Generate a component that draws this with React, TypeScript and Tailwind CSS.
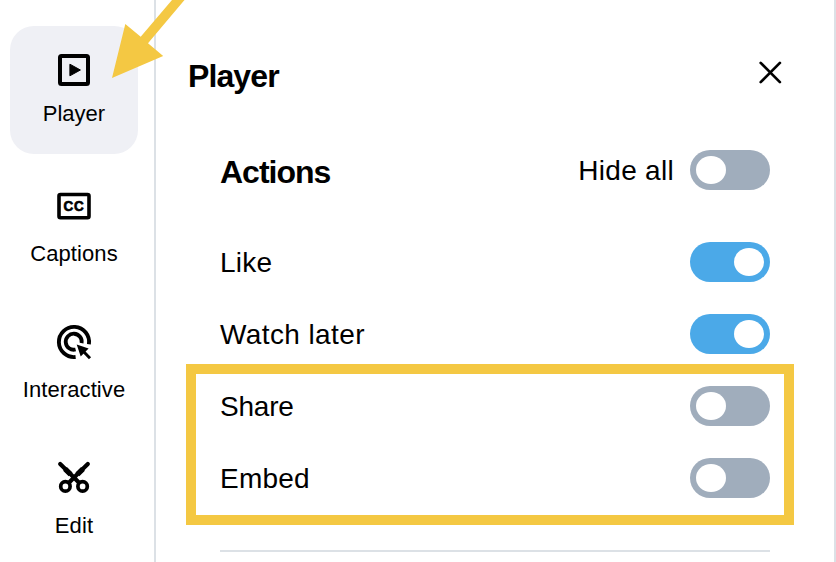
import type { ReactNode } from "react";

function PlayerIcon() {
  return (
    <svg width="36" height="36" viewBox="0 0 36 36" fill="none">
      <rect x="4" y="4" width="28" height="28" rx="1.5" stroke="#000" strokeWidth="4" />
      <path d="M13.9 12.2L24.4 18L13.9 23.8Z" fill="#000" stroke="#000" strokeLinejoin="round" />
    </svg>
  );
}

function CaptionsIcon() {
  return (
    <svg width="36" height="36" viewBox="0 0 36 36" fill="none">
      <rect x="3" y="6.5" width="30" height="23.3" rx="1.5" stroke="#000" strokeWidth="3.6" />
      <text
        transform="translate(7.4 22.8) scale(0.9 1)"
        fontFamily="Liberation Sans, sans-serif"
        fontSize="15"
        fontWeight="700"
        letterSpacing="0.9"
        stroke="#000"
        strokeWidth="0.7"
        fill="#000">
        CC
      </text>
    </svg>
  );
}

function InteractiveIcon() {
  return (
    <svg width="36" height="36" viewBox="0 0 36 36" fill="none">
      <path d="M19.6 33A15.1 15.1 0 1 1 32.9 20.3" stroke="#000" strokeWidth="3.9" />
      <path d="M19.6 25.5A8 8 0 1 1 25.6 19.2" stroke="#000" strokeWidth="3.8" />
      <path d="M20.7 20.6L32.6 24.5L24.7 32.6Z" fill="#000" />
      <path d="M27 27L34 34.2" stroke="#000" strokeWidth="3" />
    </svg>
  );
}

function EditIcon() {
  return (
    <svg width="36" height="36" viewBox="0 0 36 36" fill="none" stroke="#000">
      <circle cx="9.4" cy="26.4" r="4.7" strokeWidth="3.7" />
      <circle cx="26.6" cy="26.4" r="4.7" strokeWidth="3.7" />
      <path d="M12.4 23.2L23 12.6M23.6 23.2L13 12.6" strokeWidth="4.2" />
      <path d="M4.2 4L11.6 11.2M31.8 4L24.4 11.2" strokeWidth="4.2" strokeLinecap="round" />
      <path d="M9 8.8L14.6 14.4M27 8.8L21.4 14.4" strokeWidth="5.4" />
    </svg>
  );
}

type NavItemProps = {
  label: string;
  icon: ReactNode;
  active?: boolean;
};

function NavItem({ label, icon, active }: NavItemProps) {
  return (
    <button
      className={
        active
          ? "flex h-32 w-32 flex-col items-center rounded-3xl bg-[#eff0f5] pt-[26px]"
          : "flex h-32 w-32 flex-col items-center pt-[26px]"
      }>
      {icon}
      <span
        className={
          active
            ? "mt-3 text-[22px] leading-7"
            : "mt-4 text-[22px] leading-7 tracking-[0.1px]"
        }>
        {label}
      </span>
    </button>
  );
}

function Toggle({ on }: { on?: boolean }) {
  return (
    <span
      className={
        on
          ? "flex h-10 w-20 items-center justify-end rounded-full bg-[#4ba9e8] px-1.5"
          : "flex h-10 w-20 items-center rounded-full bg-[#a0adbc] px-1.5"
      }>
      <span className="h-7 w-[30px] rounded-[50%] bg-white" />
    </span>
  );
}

const actions = [
  { label: "Like", on: true, tracking: "tracking-[0.2px]" },
  { label: "Watch later", on: true, tracking: "tracking-[0.4px]" },
  { label: "Share", on: false, tracking: "tracking-[-0.2px]" },
  { label: "Embed", on: false, tracking: "tracking-[0.2px]" },
];

export default function App() {
  return (
    <div className="relative flex h-[562px] w-[836px] overflow-hidden bg-white font-['Liberation_Sans',Arial,sans-serif] text-black">
      {/* Sidebar */}
      <nav className="flex w-[156px] shrink-0 flex-col gap-2 border-r-2 border-[#dce1e6] pt-[26px] pl-2.5">
        <NavItem label="Player" icon={<PlayerIcon />} active />
        <NavItem label="Captions" icon={<CaptionsIcon />} />
        <NavItem label="Interactive" icon={<InteractiveIcon />} />
        <NavItem label="Edit" icon={<EditIcon />} />
      </nav>

      {/* Settings panel */}
      <main className="flex-1 border-r-2 border-[#dce1e6] pt-14 pr-16 pl-8">
        <div className="flex h-10 items-center justify-between">
          <h1 className="text-[32px] leading-10 font-bold tracking-[-0.9px]">Player</h1>
          <button className="-mt-2 -mr-3">
            <svg width="24" height="24" viewBox="0 0 24 24" fill="none">
              <path
                d="M2.7 2.9L21.9 22.1M21.9 2.9L2.7 22.1"
                stroke="#000"
                strokeWidth="2.7"
                strokeLinecap="round"
              />
            </svg>
          </button>
        </div>

        <section className="mt-[54px] ml-8">
          <div className="flex h-10 items-center">
            <h2 className="mt-1 text-[32px] leading-10 font-bold tracking-[-1px]">Actions</h2>
            <span className="mt-0.5 mr-4 ml-auto text-[28px] leading-8 tracking-[0.3px]">
              Hide all
            </span>
            <Toggle />
          </div>

          <ul className="mt-[52px] flex flex-col gap-8">
            {actions.map((action) => (
              <li key={action.label} className="flex h-10 items-center justify-between">
                <span className={`mt-0.5 text-[28px] leading-8 ${action.tracking}`}>
                  {action.label}
                </span>
                <Toggle on={action.on} />
              </li>
            ))}
          </ul>

          <hr className="mt-[52px] border-t-2 border-[#dce1e6]" />
        </section>
      </main>

      {/* Highlight box and arrow */}
      <div className="absolute top-[364px] left-[186px] h-[161px] w-[608px] border-10 border-[#f4c843]" />
      <svg className="absolute top-0 left-0" width="200" height="80" viewBox="0 0 200 80">
        <path d="M172 0H184.5L148 43.3L163.2 56L112 78L125.3 24L140.7 36.7Z" fill="#f4c843" />
      </svg>
    </div>
  );
}
